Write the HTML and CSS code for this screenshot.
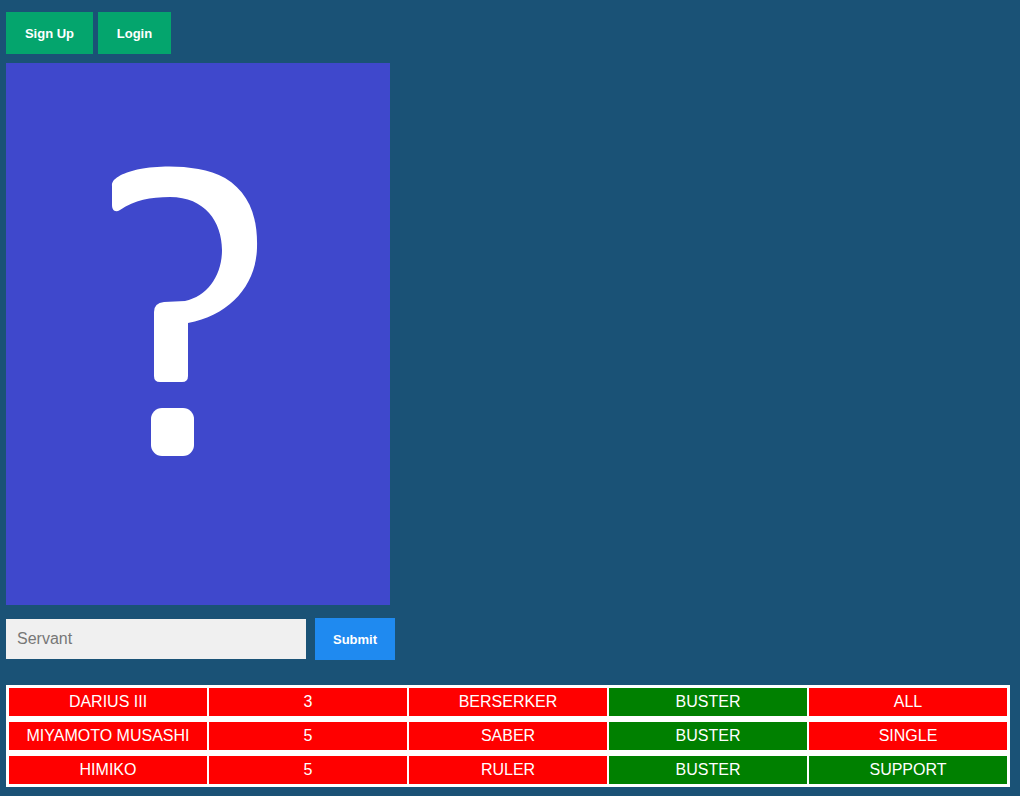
FILE: index.html
```html
<!DOCTYPE html>
<html>
<head>
<meta charset="utf-8">
<link rel="stylesheet" href="styles.css">
</head>
<body>
<div class="page">
  <div class="auth">
    <button class="btn btn-green signup">Sign Up</button>
    <button class="btn btn-green login">Login</button>
  </div>
  <div class="card">
    <svg width="384" height="542" viewBox="0 0 384 542" xmlns="http://www.w3.org/2000/svg">
      <rect width="384" height="542" fill="#3f48cc"/>
      <g transform="translate(-6,-63)" fill="#fff">
        <path d="M 112 186 C 111 178, 125 172, 140 169 C 160 165, 200 164, 225 178 C 248 192, 258 215, 257 248 C 256 285, 230 315, 188 323 L 188 376 Q 188 382 182 382 L 160 382 Q 154 382 154 376 L 154 312 Q 154 303 164 302 L 185 301 C 208 296, 222 275, 222 250 C 222 222, 205 197, 170 197 C 150 197, 135 200, 120 210 C 115 213, 112 210, 112 205 Z"/>
        <rect x="151" y="408" width="43" height="48" rx="11"/>
      </g>
    </svg>
  </div>
  <form class="guess" onsubmit="return false">
    <input class="guess-input" type="text" placeholder="Servant">
    <button class="btn btn-blue submit" type="submit">Submit</button>
  </form>
  <div class="results">
    <div class="cell red">DARIUS III</div>
    <div class="cell red">3</div>
    <div class="cell red">BERSERKER</div>
    <div class="cell green">BUSTER</div>
    <div class="cell red">ALL</div>
    <div class="cell red">MIYAMOTO MUSASHI</div>
    <div class="cell red">5</div>
    <div class="cell red">SABER</div>
    <div class="cell green">BUSTER</div>
    <div class="cell red">SINGLE</div>
    <div class="cell red">HIMIKO</div>
    <div class="cell red">5</div>
    <div class="cell red">RULER</div>
    <div class="cell green">BUSTER</div>
    <div class="cell green">SUPPORT</div>
  </div>
</div>
</body>
</html>
```
FILE: styles.css
```css
html, body {
  margin: 0;
  padding: 0;
  background: #1a5276;
  font-family: "Liberation Sans", Arial, sans-serif;
}
.page {
  padding: 12px 10px 0 6px;
}
.auth {
  display: flex;
  gap: 5px;
  height: 42px;
}
.btn {
  border: none;
  color: #fff;
  font-family: "Liberation Sans", Arial, sans-serif;
  font-weight: bold;
  font-size: 13px;
  padding: 0;
  cursor: pointer;
}
.btn-green {
  background: #04a56d;
  height: 42px;
}
.signup { width: 87px; }
.login { width: 73px; }
.card {
  margin-top: 9px;
  width: 384px;
  height: 542px;
}
.card svg { display: block; }
.guess {
  display: flex;
  align-items: center;
  gap: 9px;
  margin-top: 13px;
  height: 42px;
}
.guess-input {
  box-sizing: border-box;
  width: 300px;
  height: 40px;
  border: none;
  background: #f0f0f0;
  padding: 0 11px;
  font-family: "Liberation Sans", Arial, sans-serif;
  font-size: 16px;
  outline: none;
}
.guess-input::placeholder { color: #777; }
.btn-blue {
  background: #1f8af0;
  width: 80px;
  height: 42px;
}
.results {
  margin-top: 25px;
  width: 1004px;
  box-sizing: border-box;
  background: #fff;
  padding: 3px;
  display: grid;
  grid-template-columns: repeat(5, 1fr);
  gap: 6px 2px;
}
.cell {
  height: 28px;
  line-height: 28px;
  text-align: center;
  color: #fff;
  font-size: 16px;
}
.red { background: #ff0000; }
.green { background: #008000; }
```
